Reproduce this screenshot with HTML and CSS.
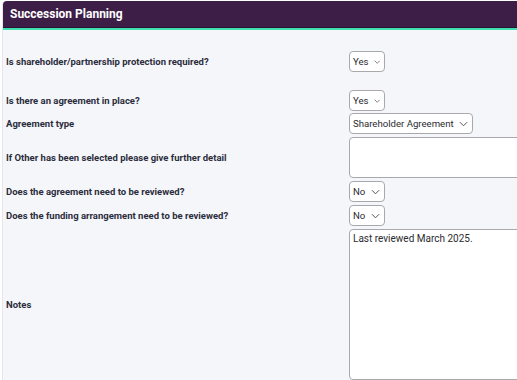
FILE: index.html
```html
<!DOCTYPE html>
<html lang="en">
<head>
    <meta charset="UTF-8">
    <title>Succession Planning</title>
    <link rel="stylesheet" href="styles.css">
</head>
<body>
    <div class="panel">
        <div class="panel-header">Succession Planning</div>

        <div class="form">
            <div class="row row-first">
                <div class="label">Is shareholder/partnership protection required?</div>
                <div class="field"><div class="select sm">Yes<svg viewBox="0 0 10 6"><polyline points="1,1 5,5 9,1"/></svg></div></div>
            </div>
            <div class="row row-second">
                <div class="label">Is there an agreement in place?</div>
                <div class="field"><div class="select sm">Yes<svg viewBox="0 0 10 6"><polyline points="1,1 5,5 9,1"/></svg></div></div>
            </div>
            <div class="row">
                <div class="label">Agreement type</div>
                <div class="field"><div class="select">Shareholder Agreement<svg viewBox="0 0 10 6"><polyline points="1,1 5,5 9,1"/></svg></div></div>
            </div>
            <div class="row">
                <div class="label">If Other has been selected please give further detail</div>
                <div class="field"><div class="textarea small"></div></div>
            </div>
            <div class="row">
                <div class="label">Does the agreement need to be reviewed?</div>
                <div class="field"><div class="select sm">No<svg viewBox="0 0 10 6"><polyline points="1,1 5,5 9,1"/></svg></div></div>
            </div>
            <div class="row">
                <div class="label">Does the funding arrangement need to be reviewed?</div>
                <div class="field"><div class="select sm">No<svg viewBox="0 0 10 6"><polyline points="1,1 5,5 9,1"/></svg></div></div>
            </div>
            <div class="row">
                <div class="label">Notes</div>
                <div class="field"><div class="textarea large">Last reviewed March 2025.</div></div>
            </div>
        </div>
    </div>
</body>
</html>
```

FILE: styles.css
```css
body {
    margin: 0;
    padding: 1px 0 0 2px;
    background-color: #ffffff;
    font-family: 'Roboto', 'Liberation Sans', sans-serif;
    overflow: hidden;
    height: 100vh;
    box-sizing: border-box;
}

.panel {
    background-color: #f5f6fa;
    border-left: 1px solid #e6e7ec;
    border-radius: 4px 0 0 0;
    height: 100%;
}

.panel-header {
    background-color: #3d1e47;
    color: #ffffff;
    font-size: 12px;
    font-weight: bold;
    height: 26px;
    line-height: 27px;
    padding-left: 7px;
    border-radius: 4px 0 0 0;
    border-bottom: 1px solid #2a1131;
    box-shadow: 0 2px 0 #40e0b0;
}

.form {
    padding-top: 23px;
}

.row {
    display: grid;
    grid-template-columns: 346px 1fr;
    align-items: center;
    margin-bottom: 3px;
}

.row-first {
    margin-bottom: 18px;
}

.row-second {
    margin-bottom: 2px;
}

.label {
    padding-left: 3px;
    font-size: 9.5px;
    font-weight: bold;
    color: #2b2d3c;
}

.field {
    display: flex;
}

.select {
    display: flex;
    align-items: center;
    gap: 5px;
    height: 19px;
    padding: 0 4px 0 3px;
    background-color: #ffffff;
    border: 1px solid #a9a9ad;
    border-radius: 4px;
    font-size: 9.6px;
    color: #2b2b30;
}

.select.sm {
    width: 27px;
    justify-content: space-between;
}

.select svg {
    width: 9px;
    height: 6px;
    fill: none;
    stroke: #555;
    stroke-width: 1.1;
}

.textarea {
    width: 180px;
    background-color: #ffffff;
    border: 1px solid #a9a9ad;
    border-radius: 4px;
    font-size: 10px;
    color: #2b2b30;
    padding: 3px 3px;
    box-sizing: border-box;
}

.textarea.small {
    height: 41px;
}

.textarea.large {
    height: 151px;
}
```
